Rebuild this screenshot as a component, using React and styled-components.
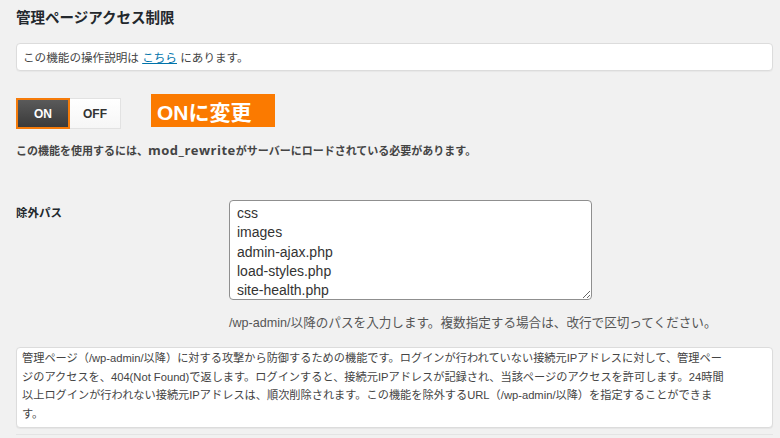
import React from 'react';
import styled, { createGlobalStyle } from 'styled-components';

const GlobalStyle = createGlobalStyle`
  html, body {
    margin: 0;
    padding: 0;
    background: #f1f1f1;
  }
  body {
    font-family: 'Liberation Sans', 'Noto Sans CJK JP', sans-serif;
    color: #444;
  }
`;

const paths = ['css', 'images', 'admin-ajax.php', 'load-styles.php', 'site-health.php'];

// lines kept as in the original so the wrap matches
const descLines = [
  '管理ページ（/wp-admin/以降）に対する攻撃から防御するための機能です。ログインが行われていない接続元IPアドレスに対して、管理ペー',
  'ジのアクセスを、404(Not Found)で返します。ログインすると、接続元IPアドレスが記録され、当該ページのアクセスを許可します。24時間',
  '以上ログインが行われない接続元IPアドレスは、順次削除されます。この機能を除外するURL（/wp-admin/以降）を指定することができま',
  'す。',
];

const App = () => (
  <Page>
    <GlobalStyle />
    <Title>管理ページアクセス制限</Title>
    <InfoBox>
      この機能の操作説明は <HelpLink href="#">こちら</HelpLink> にあります。
    </InfoBox>

    <ToggleRow>
      <Toggle>
        <ToggleButton active>ON</ToggleButton>
        <ToggleButton>OFF</ToggleButton>
      </Toggle>
      <Callout>ONに変更</Callout>
    </ToggleRow>
    <Notice>
      この機能を使用するには、<Code>mod_rewrite</Code>がサーバーにロードされている必要があります。
    </Notice>

    <FormRow>
      <FieldLabel>除外パス</FieldLabel>
      <FieldBody>
        <PathInput defaultValue={paths.join('\n')} spellCheck={false} />
        <Hint>/wp-admin/以降のパスを入力します。複数指定する場合は、改行で区切ってください。</Hint>
      </FieldBody>
    </FormRow>

    <DescBox>
      {descLines.map((line) => (
        <DescLine key={line}>{line}</DescLine>
      ))}
    </DescBox>
    <NextEdge />
  </Page>
);

const Page = styled.div`
  display: flex;
  flex-direction: column;
  padding: 8px 7px 0 16px;
  height: 438px;
  box-sizing: border-box;
  overflow: hidden;
`;

const Title = styled.h2`
  margin: 0;
  font-size: 14.5px;
  line-height: 20px;
  font-weight: bold;
  color: #23282d;
`;

const InfoBox = styled.div`
  margin-top: 15px;
  height: 28px;
  box-sizing: border-box;
  display: flex;
  align-items: center;
  padding: 0 6px;
  background: #fff;
  border: 1px solid #dcdcdc;
  border-radius: 4px;
  box-shadow: 0 1px 1px rgba(0, 0, 0, 0.04);
  font-size: 11.6px;
  color: #444;
  white-space: pre;
`;

const HelpLink = styled.a`
  color: #0073aa;
  text-decoration: underline;
`;

const ToggleRow = styled.div`
  margin-top: 23px;
  display: flex;
  align-items: flex-start;
  gap: 30px;
`;

const Toggle = styled.div`
  margin-top: 4px;
  display: flex;
`;

const ToggleButton = styled.div`
  height: 31px;
  box-sizing: border-box;
  display: flex;
  align-items: center;
  justify-content: center;
  font-size: 12px;
  font-weight: bold;
  width: ${(p) => (p.active ? '54px' : '51px')};
  color: ${(p) => (p.active ? '#fff' : '#333')};
  background: ${(p) =>
    p.active ? 'linear-gradient(#5a5a5a, #3a3a3a)' : 'linear-gradient(#fff, #f6f6f6)'};
  border: ${(p) => (p.active ? '2px solid #f57b0a' : '1px solid #e2e2e2')};
  border-left-width: ${(p) => (p.active ? '2px' : '0')};
`;

const Callout = styled.div`
  height: 33px;
  width: 124px;
  box-sizing: border-box;
  display: flex;
  align-items: center;
  padding-left: 6px;
  background: #fb7a00;
  color: #fff;
  font-size: 21px;
  font-weight: bold;
`;

const Notice = styled.p`
  margin: 13px 0 0;
  font-size: 11px;
  line-height: 16px;
  font-weight: bold;
  color: #444;
`;

const Code = styled.span`
  font-family: 'Open Sans', sans-serif;
  font-size: 13px;
  letter-spacing: 0.5px;
`;

const FormRow = styled.div`
  margin-top: 41px;
  display: grid;
  grid-template-columns: 213px 1fr;
`;

const FieldLabel = styled.div`
  margin-top: 5px;
  font-size: 11.5px;
  line-height: 16px;
  font-weight: bold;
  color: #23282d;
`;

const FieldBody = styled.div`
  display: flex;
  flex-direction: column;
`;

const PathInput = styled.textarea`
  width: 363px;
  height: 100px;
  box-sizing: border-box;
  padding: 3px 7px;
  margin: 0;
  border: 1px solid #8f8f8f;
  border-radius: 4px;
  background: #fff;
  font-family: 'Liberation Sans', sans-serif;
  font-size: 14px;
  line-height: 19.25px;
  color: #333;
  overflow: hidden;
  outline: none;
`;

const Hint = styled.p`
  margin: 14px 0 0;
  font-size: 12.6px;
  line-height: 18px;
  color: #555;
`;

const DescBox = styled.div`
  margin-top: 15px;
  padding: 1px 4px 4px 5px;
  background: #fff;
  border: 1px solid #dcdcdc;
  border-radius: 4px;
  box-shadow: 0 1px 1px rgba(0, 0, 0, 0.05);
  font-size: 11.2px;
  line-height: 18.5px;
  color: #444;
  overflow: hidden;
`;

const DescLine = styled.div`
  white-space: nowrap;
`;

const NextEdge = styled.div`
  margin-top: 6px;
  height: 1px;
  background: #e4e4e4;
`;

export default App;
